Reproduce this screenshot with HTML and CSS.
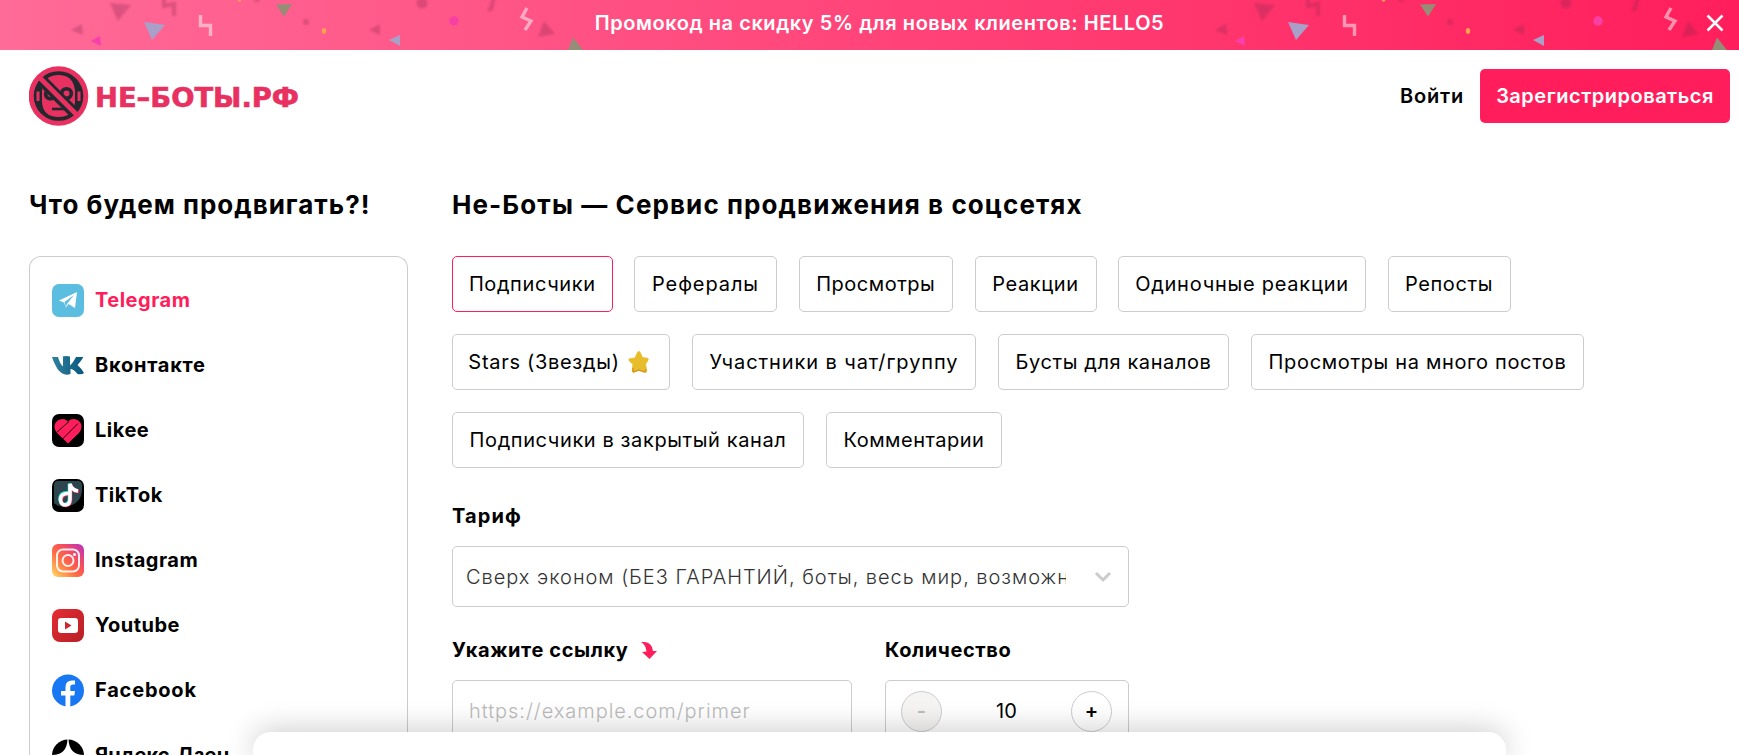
FILE: index.html
```html
<!DOCTYPE html>
<html lang="ru">
<head>
<meta charset="utf-8">
<title>Не-Боты</title>
<link rel="stylesheet" href="styles.css">
</head>
<body>
<div class="banner">
  <svg class="confetti" width="1739" height="50" viewBox="0 0 1739 50" aria-hidden="true">
    <defs>
      <filter id="soft"><feGaussianBlur stdDeviation="1"/></filter>
      <g id="party">
        <g fill="#8c2850" opacity=".3" filter="url(#soft)">
          <path d="M110 3L131 5L118 21Z"/><path d="M71 30L82 24L83 35Z"/>
          <path d="M369 30L380 24V35Z"/><path d="M544 21L555 34L538 37Z"/>
          <circle cx="306" cy="22" r="3"/><circle cx="422" cy="3" r="5.500"/><circle cx="257" cy="-1" r="3"/>
          <path d="M164-2V6L174 4V16" fill="none" stroke="#8c2850" stroke-width="4"/>
          <path d="M494-3L491 9L488 10" fill="none" stroke="#8c2850" stroke-width="4"/>
        </g>
        <path d="M144 22L165 25L152 40Z" fill="#a8a0c8"/>
        <path d="M389 40L400 35V46Z" fill="#a8a0c8"/>
        <path d="M91 41L100 36L101 46Z" fill="#f83fac"/>
        <circle cx="454" cy="21" r="4.700" fill="#f83fa4"/>
        <path d="M276 4.500L292 4L284 16.500Z" fill="#958d76"/>
        <path d="M573 37.500L583 50H568Z" fill="#958d76"/>
        <ellipse cx="324" cy="31" rx="2.200" ry="3" fill="#ffa14f"/>
        <circle cx="239.500" cy="0" r="1.800" fill="#ffa14f"/>
        <path d="M200.500 15V25.500H210.500V36M527 8L522 17L531 21L525 30" fill="none" stroke="#fff" stroke-opacity=".5" stroke-width="3.400"/>
      </g>
    </defs>
    <use href="#party"/><use href="#party" x="1144"/>
  </svg>
  <span class="banner-text">Промокод на скидку 5% для новых клиентов: HELLO5</span>
  <svg class="banner-close" viewBox="0 0 18 18"><path d="M1.500 1.500L16.500 16.500M16.500 1.500L1.500 16.500"/></svg>
</div>

<header class="header">
  <svg class="logo" width="272" height="60" viewBox="0 0 272 60">
    <circle cx="29.500" cy="30" r="29.800" fill="#e83160"/>
    <circle cx="29.500" cy="30" r="24.800" fill="#23272e"/>
    <path d="M13 24Q15 9 29.500 9T46 24V36Q45 51 29.500 51T13 36Z" fill="#e83160"/>
    <path d="M9 25.500V35M50 25.500V35" stroke="#e83160" stroke-width="3"/>
    <circle cx="21.500" cy="28" r="4.800" fill="none" stroke="#23272e" stroke-width="3.600"/>
    <circle cx="37.500" cy="27.500" r="4.800" fill="none" stroke="#23272e" stroke-width="3.600"/>
    <path d="M23 43H35" stroke="#23272e" stroke-width="2.600"/>
    <path d="M13 14.500L44.500 46" stroke="#23272e" stroke-width="11"/>
    <path d="M10 11L48 49" stroke="#e83160" stroke-width="5"/>
    <text class="logo-text" x="66" y="41" textLength="204" lengthAdjust="spacingAndGlyphs">НЕ–БОТЫ.РФ</text>
  </svg>
  <nav class="auth">
    <a class="login">Войти</a>
    <a class="register">Зарегистрироваться</a>
  </nav>
</header>

<main class="page">
  <aside class="side">
    <h2 class="title title-side">Что будем продвигать?!</h2>
    <ul class="networks">
      <li class="network active">
        <svg class="icon" viewBox="0 0 32 33"><rect width="32" height="33" rx="7" fill="#5bbde0"/><path d="M7 16.500L25 8L23 24L16.500 20L14 23.500L12 18.500Z" fill="#fff"/><path d="M12.500 18L22 11L15 20L14 23Z" fill="#5bbde0"/></svg>
        <span class="n-telegram">Telegram</span></li>
      <li class="network">
        <svg class="icon" viewBox="0 0 32 33"><defs><linearGradient id="vk"><stop stop-color="#33819f"/><stop offset="1" stop-color="#07587c"/></linearGradient></defs><path d="M0 8H6Q8 15 11 17.500V8.500L10.500 7.500Q14 6.500 18 7.500V16.500Q21 14 24 8H31Q31.500 9 25.500 16Q30 20 32 24Q30 26 25.500 25Q21.500 20 18.500 20V25Q11 27.500 5.500 20Q1 12 0 8Z" fill="url(#vk)"/></svg>
        <span class="n-vk">Вконтакте</span></li>
      <li class="network">
        <svg class="icon" viewBox="0 0 32 33"><rect width="32" height="33" rx="7"/><path d="M16 29.500L5 19Q0 12 5 7Q11 3 16 7.500Q21 3 27 7Q32 12 27 19Z" fill="#ff1e5b"/><path d="M4.500 18.500L17 7.500M10.500 25L26 9.500" stroke="#000" stroke-width=".9"/></svg>
        <span class="n-likee">Likee</span></li>
      <li class="network">
        <svg class="icon" viewBox="0 0 32 33"><rect width="32" height="33" rx="7"/><path d="M2 6Q2 2 6 2H26Q30 2 30 6V12Q29 22 20 26Q8 30 2 24Z" fill="#2d464d"/><g fill="none" stroke-width="3.600"><path d="M16 14Q8 13 8 20.500Q9 26 13 25.500Q17.500 25 17.500 20V4.500Q19 11 25.500 12" stroke="#25e5e0"/><path d="M17.500 15Q9 15 9 21.500Q10 27 14 26.500Q18.500 26 18.500 20.500V5.500Q20 12 27 12.500" stroke="#ef2e61"/><path d="M17 14.500Q8.500 14 8.500 21Q9 26 13.500 26Q18 25.500 18 20V5Q19.500 11 26 12" stroke="#fff"/></g></svg>
        <span class="n-tiktok">TikTok</span></li>
      <li class="network">
        <svg class="icon" viewBox="0 0 32 33"><defs><linearGradient id="ig" x1="0" y1="1" x2="1" y2="0"><stop stop-color="#ffdd62"/><stop offset=".4" stop-color="#ff6d43"/><stop offset=".65" stop-color="#f54c5d"/><stop offset="1" stop-color="#b630c5"/></linearGradient></defs><rect width="32" height="33" rx="6" fill="url(#ig)"/><g fill="none" stroke="#fff" stroke-opacity=".9" stroke-width="2"><rect x="5" y="5.500" width="22" height="22" rx="6"/><circle cx="16" cy="16.500" r="5.500"/></g><circle cx="22.500" cy="10.500" r="1.500" fill="#fff"/></svg>
        <span class="n-instagram">Instagram</span></li>
      <li class="network">
        <svg class="icon" viewBox="0 0 32 33"><defs><linearGradient id="yt" x2="1" y2="1"><stop stop-color="#e52c34"/><stop offset="1" stop-color="#b71f25"/></linearGradient></defs><rect width="32" height="33" rx="8" fill="url(#yt)"/><rect x="6" y="9" width="20" height="15" rx="3" fill="#fff"/><path d="M13 12.500L19.500 16.500L13 20.500Z" fill="#cc272d"/></svg>
        <span class="n-youtube">Youtube</span></li>
      <li class="network">
        <svg class="icon" viewBox="0 0 32 33"><circle cx="16" cy="16.500" r="16" fill="#1877f2"/><path d="M13.500 33V21.500H9V17H13.500V13Q13.500 6.500 20 6.500H23V10.500H21Q18.300 10.500 18.300 13V17H23L22.300 21.500H18.300V33Z" fill="#fff"/></svg>
        <span class="n-facebook">Facebook</span></li>
      <li class="network">
        <svg class="icon" viewBox="0 0 32 33"><circle cx="16" cy="16.500" r="16"/><path d="M15.500 0H16.500Q17 16 32 16V17Q17 17 16.500 33H15.500Q15 17 0 17V16Q15 16 15.500 0Z" fill="#fff"/></svg>
        <span class="n-dzen">Яндекс.Дзен</span></li>
    </ul>
  </aside>

  <section class="order">
    <h1 class="title title-main">Не-Боты — Сервис продвижения в соцсетях</h1>
    <div class="services">
      <div class="row row-first"><a class="pill subscribers selected">Подписчики</a><a class="pill referrals">Рефералы</a><a class="pill views">Просмотры</a><a class="pill reactions">Реакции</a><a class="pill single">Одиночные реакции</a><a class="pill reposts">Репосты</a></div>
      <div class="row"><a class="pill stars"><span>Stars (Звезды)</span><svg class="star" viewBox="0 0 22 24"><path d="M11 1Q12.500 1 14.500 7L20 8Q22 9 18 14L19 20Q19 24 16 22L11 20L6 22.500Q3 23 4 18.500L4.500 14Q-1 10 1 8.500L7 7.500Q9 1 11 1Z" fill="#e8bd2b"/><path d="M5 18Q4.500 21 5.500 22L11 20L16.500 22Q18 22 17.500 19" fill="none" stroke="#d39a20" stroke-width="1.500"/></svg></a><a class="pill members">Участники в чат/группу</a><a class="pill boosts">Бусты для каналов</a><a class="pill many">Просмотры на много постов</a></div>
      <div class="row"><a class="pill closed">Подписчики в закрытый канал</a><a class="pill comments">Комментарии</a></div>
    </div>
    <div class="label l-tariff">Тариф</div>
    <div class="select">
      <span class="select-value">Сверх эконом (БЕЗ ГАРАНТИЙ, боты, весь мир, возможны</span>
      <svg class="chevron" viewBox="0 0 18 12"><path d="M2 2L9 9L16 2"/></svg>
    </div>
    <div class="fields">
      <div class="field field-link">
        <div class="label"><span>Укажите ссылку</span><svg class="arrow" viewBox="0 0 16 17"><path d="M0 0Q11-1 12 9H16L8.500 17L1 10L5.500 9.500Q5 3 0 0Z" fill="#ff1e5b"/></svg></div>
        <div class="input">https://example.com/primer</div>
      </div>
      <div class="field field-count">
        <div class="label">Количество</div>
        <div class="counter"><span class="round off">-</span><span class="count">10</span><span class="round">+</span></div>
      </div>
    </div>
  </section>
</main>
<div class="bottom-panel"></div>
</body>
</html>
```

FILE: styles.css
```css
* { box-sizing: border-box; }
html, body { margin: 0; height: 755px; overflow: hidden; }
body { font-family: Inter, "Open Sans", sans-serif; font-size: 20px; line-height: 24px; color: #000; background: #fff; white-space: nowrap; }

.banner { position: relative; display: flex; justify-content: center; height: 50px; padding: 11px 0 0 20px; background: linear-gradient(90deg, #ff6b98, #ff1e5b); overflow: hidden; }
.confetti { position: absolute; inset: 0; }
.banner-text { z-index: 1; color: #fff; font-weight: 600; letter-spacing: .56px; }
.banner-close { position: absolute; right: 15px; top: 14px; width: 18px; height: 18px; fill: none; stroke: #fff; stroke-width: 2.5; }

.header { display: flex; justify-content: space-between; align-items: flex-start; height: 138px; padding: 16px 9px 0 29px; }
.logo-text { font: 700 26px "DejaVu Sans", sans-serif; fill: #e83160; stroke: #e83160; stroke-width: .6; }
.auth { display: flex; align-items: center; gap: 16px; margin-top: 3px; font-weight: 600; }
.login { letter-spacing: .8px; }
.register { display: flex; align-items: center; justify-content: center; width: 250px; height: 54px; border-radius: 5px; background: #ff1e5b; color: #fff; letter-spacing: .5px; }

.page { display: flex; gap: 44px; height: 567px; padding: 0 29px; overflow: hidden; }
.side { width: 379px; height: 567px; flex: none; display: flex; flex-direction: column; }
.title { margin: 1px 0 35px; font-size: 26px; line-height: 32px; font-weight: 700; }
.title-side { letter-spacing: 1px; }
.title-main { letter-spacing: 1.1px; }
.networks { flex: 1; min-height: 0; list-style: none; margin: 0; padding: 27px 22px 0; border: 1px solid #ccc; border-bottom: 0; border-radius: 12px 12px 0 0; }
.network { display: flex; align-items: flex-start; gap: 11px; height: 65px; font-weight: 700; line-height: 33px; letter-spacing: .5px; }
.active { color: #ff1e5b; }
.icon { width: 32px; height: 33px; flex: none; }
.n-vk { letter-spacing: .75px; }
.n-facebook { letter-spacing: .8px; }
.n-dzen { letter-spacing: .15px; }

.services { display: flex; flex-direction: column; gap: 22px; }
.row { display: flex; gap: 22px; }
.row-first { gap: 21.5px; }
.pill { display: flex; align-items: center; justify-content: center; height: 56px; border: 1px solid #ccc; border-radius: 5px; letter-spacing: .6px; }
.selected { border-color: #ff1e5b; }
.star { width: 22px; height: 24px; margin: 0 4px 0 8px; }
.subscribers { width: 160.500px; }
.referrals { width: 143px; letter-spacing: .9px; }
.views { width: 154.500px; letter-spacing: .5px; }
.reactions { width: 122px; }
.single { width: 248px; letter-spacing: .75px; }
.reposts { width: 123px; }
.stars { width: 218px; letter-spacing: .7px; }
.members { width: 284px; letter-spacing: .9px; }
.boosts { width: 231px; }
.many { width: 333px; letter-spacing: .65px; }
.closed { width: 352px; }
.comments { width: 176px; letter-spacing: .5px; }

.label { display: flex; align-items: center; font-weight: 700; letter-spacing: .6px; }
.l-tariff { margin: 36px 0 18px; letter-spacing: 1.1px; }
.select { display: flex; align-items: center; justify-content: space-between; width: 677px; height: 61px; padding: 0 16px 0 13px; border: 1px solid #ccc; border-radius: 5px; color: #333; }
.select-value { width: 600px; overflow: hidden; font-weight: 300; letter-spacing: .97px; }
.chevron { width: 18px; height: 12px; fill: none; stroke: #ccc; stroke-width: 3; }
.fields { display: flex; gap: 33px; margin-top: 31px; }
.field-link { width: 400px; }
.field-count { width: 244px; }
.arrow { width: 16px; height: 17px; margin-left: 13px; }
.input, .counter { display: flex; align-items: center; height: 62px; margin-top: 18px; padding: 0 16px; border: 1px solid #ccc; border-radius: 5px; }
.input { color: #bbb; font-weight: 300; letter-spacing: .94px; }
.counter { padding: 0 16px 0 15px; justify-content: space-between; }
.round { display: flex; align-items: center; justify-content: center; width: 41px; height: 41px; border: 1px solid #ccc; border-radius: 50%; font-weight: 600; }
.off { background: #f5f4f3; color: #bbb; }

.bottom-panel { position: fixed; left: 253px; bottom: 0; width: 1253px; height: 23px; border-radius: 18px 18px 0 0; background: #fff; box-shadow: 0 0 30px rgba(0, 0, 0, .25); }
```
